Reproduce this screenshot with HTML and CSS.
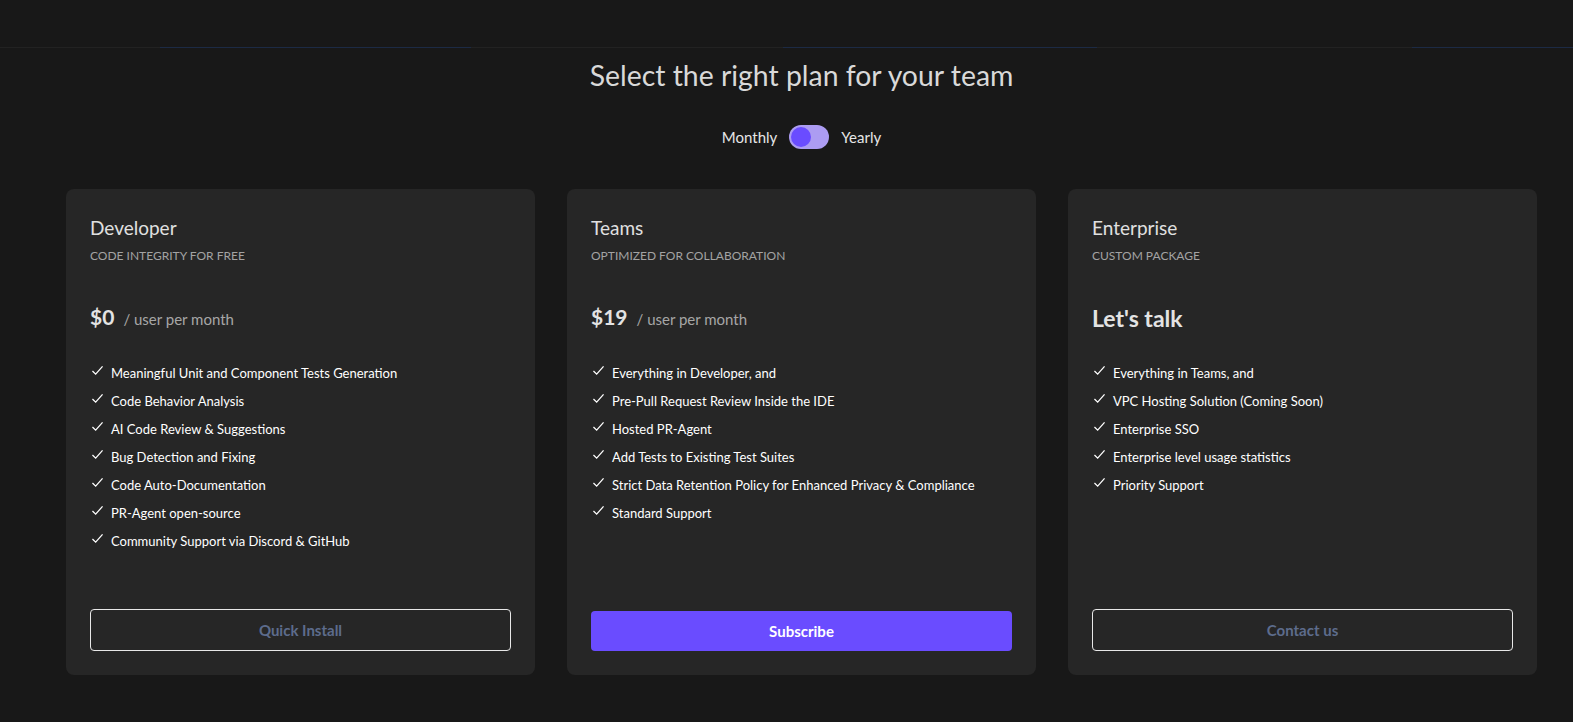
FILE: index.html
```html
<!DOCTYPE html>
<html>
<head>
<meta charset="utf-8">
<link rel="stylesheet" href="styles.css">
</head>
<body>
<div class="topbar"></div>
<main class="pricing">
  <h1 class="heading">Select the right plan for your team</h1>
  <div class="billing">
    <span class="billing-label">Monthly</span>
    <span class="switch"><span class="knob"></span></span>
    <span class="billing-label">Yearly</span>
  </div>
  <div class="plans">
    <section class="card">
      <h2 class="plan-name">Developer</h2>
      <p class="plan-tag">CODE INTEGRITY FOR FREE</p>
      <div class="price"><span class="amount">$0</span><span class="per">/ user per month</span></div>
      <ul class="features">
        <li><svg class="check" viewBox="0 0 14 12"><path d="M1.5 6.5 L5 10 L12.5 1.5"/></svg>Meaningful Unit and Component Tests Generation</li>
        <li><svg class="check" viewBox="0 0 14 12"><path d="M1.5 6.5 L5 10 L12.5 1.5"/></svg>Code Behavior Analysis</li>
        <li><svg class="check" viewBox="0 0 14 12"><path d="M1.5 6.5 L5 10 L12.5 1.5"/></svg>AI Code Review &amp; Suggestions</li>
        <li><svg class="check" viewBox="0 0 14 12"><path d="M1.5 6.5 L5 10 L12.5 1.5"/></svg>Bug Detection and Fixing</li>
        <li><svg class="check" viewBox="0 0 14 12"><path d="M1.5 6.5 L5 10 L12.5 1.5"/></svg>Code Auto-Documentation</li>
        <li><svg class="check" viewBox="0 0 14 12"><path d="M1.5 6.5 L5 10 L12.5 1.5"/></svg>PR-Agent open-source</li>
        <li><svg class="check" viewBox="0 0 14 12"><path d="M1.5 6.5 L5 10 L12.5 1.5"/></svg>Community Support via Discord &amp; GitHub</li>
      </ul>
      <button class="btn btn-outline">Quick Install</button>
    </section>
    <section class="card">
      <h2 class="plan-name">Teams</h2>
      <p class="plan-tag">OPTIMIZED FOR COLLABORATION</p>
      <div class="price"><span class="amount">$19</span><span class="per">/ user per month</span></div>
      <ul class="features">
        <li><svg class="check" viewBox="0 0 14 12"><path d="M1.5 6.5 L5 10 L12.5 1.5"/></svg>Everything in Developer, and</li>
        <li><svg class="check" viewBox="0 0 14 12"><path d="M1.5 6.5 L5 10 L12.5 1.5"/></svg>Pre-Pull Request Review Inside the IDE</li>
        <li><svg class="check" viewBox="0 0 14 12"><path d="M1.5 6.5 L5 10 L12.5 1.5"/></svg>Hosted PR-Agent</li>
        <li><svg class="check" viewBox="0 0 14 12"><path d="M1.5 6.5 L5 10 L12.5 1.5"/></svg>Add Tests to Existing Test Suites</li>
        <li><svg class="check" viewBox="0 0 14 12"><path d="M1.5 6.5 L5 10 L12.5 1.5"/></svg>Strict Data Retention Policy for Enhanced Privacy &amp; Compliance</li>
        <li><svg class="check" viewBox="0 0 14 12"><path d="M1.5 6.5 L5 10 L12.5 1.5"/></svg>Standard Support</li>
      </ul>
      <button class="btn btn-primary">Subscribe</button>
    </section>
    <section class="card">
      <h2 class="plan-name">Enterprise</h2>
      <p class="plan-tag">CUSTOM PACKAGE</p>
      <div class="price"><span class="amount talk">Let's talk</span></div>
      <ul class="features">
        <li><svg class="check" viewBox="0 0 14 12"><path d="M1.5 6.5 L5 10 L12.5 1.5"/></svg>Everything in Teams, and</li>
        <li><svg class="check" viewBox="0 0 14 12"><path d="M1.5 6.5 L5 10 L12.5 1.5"/></svg>VPC Hosting Solution (Coming Soon)</li>
        <li><svg class="check" viewBox="0 0 14 12"><path d="M1.5 6.5 L5 10 L12.5 1.5"/></svg>Enterprise SSO</li>
        <li><svg class="check" viewBox="0 0 14 12"><path d="M1.5 6.5 L5 10 L12.5 1.5"/></svg>Enterprise level usage statistics</li>
        <li><svg class="check" viewBox="0 0 14 12"><path d="M1.5 6.5 L5 10 L12.5 1.5"/></svg>Priority Support</li>
      </ul>
      <button class="btn btn-outline">Contact us</button>
    </section>
  </div>
</main>
</body>
</html>
```
FILE: styles.css
```css
* { box-sizing: border-box; }
html, body { margin: 0; padding: 0; }
body {
  background: #181818;
  font-family: Lato, "Open Sans", sans-serif;
  color: #ffffff;
  height: 722px;
  overflow: hidden;
}
.topbar {
  height: 49px;
  border-bottom: 1px solid transparent;
  background:
    linear-gradient(90deg, #222 0, #222 160px, #1c2a44 160px, #1c2a44 471px, #222 471px, #222 783px, #1c2a44 783px, #1c2a44 1097px, #222 1097px, #222 1412px, #1c2a44 1412px) bottom / 100% 1px no-repeat;
}
.pricing {
  padding: 0 36px 0 66px;
  display: flex;
  flex-direction: column;
  align-items: center;
}
.heading {
  margin: 7px 0 0;
  font-size: 28.4px;
  font-weight: 400;
  color: #d9d9d9;
  line-height: 38px;
}
.billing {
  margin-top: 31px;
  display: flex;
  align-items: center;
  gap: 12px;
}
.billing-label {
  font-size: 15px;
  color: #e6e6e6;
}
.switch {
  width: 40px;
  height: 24px;
  border-radius: 12px;
  background: #ac9cf2;
  padding: 2px;
  display: flex;
}
.knob {
  width: 20px;
  height: 20px;
  border-radius: 50%;
  background: #6a4cff;
}
.plans {
  margin-top: 40px;
  width: 100%;
  display: grid;
  grid-template-columns: repeat(3, 1fr);
  gap: 32px;
}
.card {
  background: #262626;
  border-radius: 8px;
  min-height: 486px;
  padding: 26px 24px 24px;
  display: flex;
  flex-direction: column;
}
.plan-name {
  margin: 0;
  font-size: 19px;
  font-weight: 400;
  color: #e0e0e0;
  line-height: 26px;
}
.plan-tag {
  margin: 7px 0 0;
  font-size: 12px;
  color: #a3a3a3;
  line-height: 16px;
}
.price {
  margin-top: 40px;
  display: flex;
  align-items: baseline;
  height: 30px;
}
.amount {
  font-size: 21px;
  font-weight: 700;
  color: #e3e3e3;
}
.amount.talk {
  font-size: 23px;
}
.per {
  margin-left: 9px;
  font-size: 15px;
  color: #a6a6a6;
}
.features {
  list-style: none;
  margin: 29px 0 0;
  padding: 0;
  display: flex;
  flex-direction: column;
  gap: 8px;
}
.features li {
  display: flex;
  align-items: center;
  font-size: 13px;
  line-height: 20px;
  color: #ffffff;
}
.check {
  width: 13px;
  height: 11px;
  margin: -6px 7px 0 1px;
  fill: none;
  stroke: #ffffff;
  stroke-width: 1.4;
}
.btn {
  margin-top: auto;
  width: 100%;
  height: 42px;
  border-radius: 4px;
  font-family: inherit;
  font-size: 15px;
  font-weight: 700;
}
.btn-outline {
  background: transparent;
  border: 1px solid #e8e8e8;
  color: #5d6c8c;
}
.btn-primary {
  height: 40px;
  background: #6a4cff;
  border: none;
  color: #ffffff;
}
```
